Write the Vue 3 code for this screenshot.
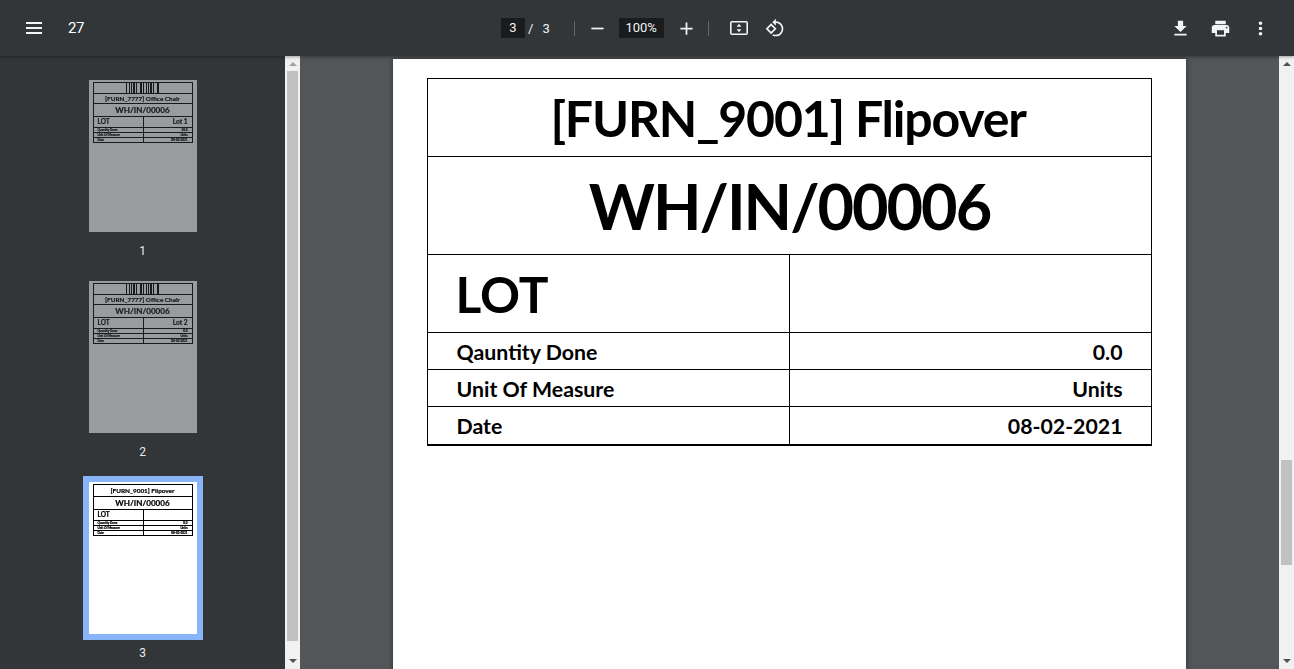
<script setup>
const thumbs = [
  { id: 1, title: "[FURN_7777] Office Chair", lot: "Lot 1", qty: "50.0", barcode: true },
  { id: 2, title: "[FURN_7777] Office Chair", lot: "Lot 2", qty: "0.0", barcode: true },
  { id: 3, title: "[FURN_9001] Flipover", lot: "", qty: "0.0", barcode: false, active: true },
];

const rows = [
  { label: "Qauntity Done", value: "0.0" },
  { label: "Unit Of Measure", value: "Units" },
  { label: "Date", value: "08-02-2021" },
];
</script>

<template>
  <div class="viewer">
    <header class="toolbar">
      <div class="toolbar__left">
        <svg class="icon icon--menu" viewBox="0 0 24 24"><path d="M4 18h16v-2H4v2zm0-5h16v-2H4v2zm0-7v2h16V6H4z" /></svg>
        <span class="doc-title">27</span>
      </div>
      <div class="toolbar__center">
        <span class="page-box">3</span>
        <span class="slash">/</span>
        <span class="page-total">3</span>
        <span class="sep sep--a"></span>
        <svg class="icon icon--small icon--minus" viewBox="0 0 24 24"><path d="M19 13H5v-2h14v2z" /></svg>
        <span class="zoom-box">100%</span>
        <svg class="icon icon--small icon--plus" viewBox="0 0 24 24"><path d="M19 13h-6v6h-2v-6H5v-2h6V5h2v6h6v2z" /></svg>
        <span class="sep sep--b"></span>
        <svg class="icon icon--fit" viewBox="0 0 24 24"><path fill-rule="evenodd" d="M5 5h14a2 2 0 0 1 2 2v10a2 2 0 0 1-2 2H5a2 2 0 0 1-2-2V7a2 2 0 0 1 2-2zm0 1.6a.4.4 0 0 0-.4.4v10c0 .2.2.4.4.4h14a.4.4 0 0 0 .4-.4V7a.4.4 0 0 0-.4-.4H5z" /><path d="M12 7.8 9.6 10.8h4.8zM12 16.2l2.4-3H9.6z" /></svg>
        <svg class="icon icon--rotate" viewBox="0 0 24 24"><path d="M7.34 6.41L.86 12.9l6.49 6.48 6.49-6.48-6.5-6.49zM3.69 12.9l3.66-3.66L11 12.9l-3.66 3.66-3.65-3.66zm15.67-6.26C17.61 4.88 15.3 4 13 4V.76L8.76 5 13 9.24V6c1.79 0 3.58.68 4.95 2.05 2.73 2.73 2.73 7.17 0 9.9C16.58 19.32 14.79 20 13 20c-.97 0-1.94-.21-2.84-.61l-1.49 1.49C10.02 21.62 11.51 22 13 22c2.3 0 4.61-.88 6.36-2.64 3.52-3.51 3.52-9.21 0-12.72z" /></svg>
      </div>
      <div class="toolbar__right">
        <svg class="icon icon--small" viewBox="0 0 24 24"><path d="M19 9h-4V3H9v6H5l7 7 7-7zM5 18v2h14v-2H5z" /></svg>
        <svg class="icon icon--small" viewBox="0 0 24 24"><path d="M19 8H5c-1.66 0-3 1.34-3 3v6h4v4h12v-4h4v-6c0-1.66-1.34-3-3-3zm-3 11H8v-5h8v5zm3-7c-.55 0-1-.45-1-1s.45-1 1-1 1 .45 1 1-.45 1-1 1zm-1-9H6v4h12V3z" /></svg>
        <svg class="icon icon--small" viewBox="0 0 24 24"><path d="M12 8c1.1 0 2-.9 2-2s-.9-2-2-2-2 .9-2 2 .9 2 2 2zm0 2c-1.1 0-2 .9-2 2s.9 2 2 2 2-.9 2-2-.9-2-2-2zm0 6c-1.1 0-2 .9-2 2s.9 2 2 2 2-.9 2-2-.9-2-2-2z" /></svg>
      </div>
    </header>

    <div class="body">
      <aside class="sidebar">
        <div v-for="t in thumbs" :key="t.id" class="thumb" :class="{ 'thumb--active': t.active }">
          <div class="thumb__frame">
            <div class="thumb__page">
              <div class="mini">
                <div v-if="t.barcode" class="mini__row mini__row--bar"><span class="barcode"></span></div>
                <div class="mini__row mini__row--title">{{ t.title }}</div>
                <div class="mini__row mini__row--wh">WH/IN/00006</div>
                <div class="mini__split mini__split--lot">
                  <span>LOT</span>
                  <span>{{ t.lot }}</span>
                </div>
                <div class="mini__split mini__split--tiny">
                  <span>Qauntity Done</span>
                  <span>{{ t.qty }}</span>
                </div>
                <div class="mini__split mini__split--tiny">
                  <span>Unit Of Measure</span>
                  <span>Units</span>
                </div>
                <div class="mini__split mini__split--tiny">
                  <span>Date</span>
                  <span>08-02-2021</span>
                </div>
              </div>
            </div>
          </div>
          <div class="thumb__label">{{ t.id }}</div>
        </div>
      </aside>

      <div class="scrollbar scrollbar--side">
        <span class="arrow arrow--up"></span>
        <span class="scrollbar__thumb"></span>
        <span class="arrow arrow--down"></span>
      </div>

      <main class="stage">
        <div class="paper">
          <table class="label">
            <tbody>
              <tr class="label__title">
                <td colspan="2">[FURN_9001] Flipover</td>
              </tr>
              <tr class="label__ref">
                <td colspan="2">WH/IN/00006</td>
              </tr>
              <tr class="label__lot">
                <td>LOT</td>
                <td></td>
              </tr>
              <tr v-for="r in rows" :key="r.label" class="label__row">
                <td>{{ r.label }}</td>
                <td class="num">{{ r.value }}</td>
              </tr>
            </tbody>
          </table>
        </div>
      </main>

      <div class="scrollbar scrollbar--main">
        <span class="arrow arrow--up"></span>
        <span class="scrollbar__thumb"></span>
        <span class="arrow arrow--down"></span>
      </div>
    </div>
  </div>
</template>

<style>
html,
body {
  margin: 0;
  overflow: hidden;
}
</style>

<style scoped>
.viewer {
  width: 1294px;
  height: 669px;
  display: flex;
  flex-direction: column;
  overflow: hidden;
  font-family: Roboto, "Liberation Sans", sans-serif;
  background: #323639;
}

/* toolbar */
.toolbar {
  height: 56px;
  flex: none;
  display: flex;
  align-items: center;
  background: #323639;
  color: #f1f3f4;
  position: relative;
  z-index: 3;
  box-shadow: 0 1px 3px rgba(0, 0, 0, 0.35);
}
.icon {
  width: 24px;
  height: 24px;
  flex: none;
  fill: #f1f3f4;
}
.icon--small {
  width: 21px;
  height: 21px;
}
.toolbar__left {
  width: 501px;
  flex: none;
  display: flex;
  align-items: center;
  padding-left: 22px;
  box-sizing: border-box;
}
.doc-title {
  margin-left: 22px;
  font-size: 15px;
  letter-spacing: -0.5px;
  color: #fff;
}
.toolbar__center {
  display: flex;
  align-items: center;
  font-size: 13px;
}
.page-box {
  width: 24px;
  height: 20px;
  line-height: 20px;
  text-align: center;
  background: #191b1c;
}
.slash {
  margin-left: 3px;
}
.page-total {
  margin-left: 9px;
}
.sep {
  width: 1px;
  height: 15px;
  background: #63676a;
}
.sep--a {
  margin-left: 24px;
}
.icon--minus {
  margin-left: 12px;
}
.zoom-box {
  width: 45px;
  height: 20px;
  line-height: 20px;
  margin-left: 11px;
  text-align: center;
  background: #191b1c;
}
.icon--plus {
  margin-left: 12px;
}
.sep--b {
  margin-left: 11px;
}
.icon--fit {
  margin-left: 18px;
}
.icon--rotate {
  margin-left: 14px;
  width: 20px;
  height: 20px;
}
.toolbar__right {
  margin-left: auto;
  display: flex;
  gap: 19px;
  padding-right: 23px;
}

/* body */
.body {
  flex: 1;
  min-height: 0;
  display: flex;
}
.sidebar {
  width: 285px;
  flex: none;
  padding-top: 24px;
  box-sizing: border-box;
  background: #323639;
  overflow: hidden;
}
.thumb {
  display: flex;
  flex-direction: column;
  align-items: center;
  margin-bottom: 18px;
  color: #e8eaed;
}
.thumb__frame {
  padding: 6px;
  margin: -6px 0 0;
}
.thumb--active .thumb__frame {
  background: #8ab4f8;
}
.thumb__page {
  width: 108px;
  height: 152px;
  padding: 2px 4px;
  box-sizing: border-box;
  background: #fff;
  opacity: 0.5;
  font-family: Lato, "Open Sans", sans-serif;
  font-weight: 700;
  color: #000;
  filter: blur(0.4px);
  -webkit-text-stroke: 0.2px #000;
}
.thumb--active .thumb__page {
  opacity: 1;
}
.thumb__label {
  margin-top: 5px;
  height: 20px;
  line-height: 17px;
  font-size: 12px;
}

.mini {
  border: 1px solid #000;
}
.mini__row {
  text-align: center;
  border-bottom: 1px solid #000;
  white-space: nowrap;
}
.mini__row--bar {
  height: 10px;
  display: flex;
  justify-content: center;
  align-items: center;
}
.barcode {
  width: 33px;
  height: 10px;
  background: repeating-linear-gradient(90deg, #000 0 1px, #fff 1px 1.6px, #000 1.6px 2.2px, #fff 2.2px 3.4px);
}
.mini__row--title {
  height: 9px;
  line-height: 10px;
  font-size: 6.4px;
}
.mini__row--title:first-child {
  height: 11px;
  line-height: 12px;
}
.mini__row--wh {
  height: 12px;
  line-height: 13px;
  font-size: 8.1px;
}
.mini__split {
  display: grid;
  grid-template-columns: 1fr 1fr;
  border-bottom: 1px solid #000;
}
.mini__split:last-child {
  border-bottom: 0;
}
.mini__split span {
  padding: 0 4px;
  white-space: nowrap;
}
.mini__split span:last-child {
  text-align: right;
  border-left: 1px solid #000;
}
.mini__split--lot {
  height: 10px;
  line-height: 10px;
  font-size: 6.5px;
}
.mini__split--tiny {
  height: 4px;
  line-height: 4px;
  font-size: 3px;
}

/* scrollbars */
.scrollbar {
  width: 15px;
  flex: none;
  background: #f1f1f1;
  display: flex;
  flex-direction: column;
  align-items: center;
}
.scrollbar__thumb {
  width: 11px;
  background: #c1c1c1;
}
.scrollbar--side .scrollbar__thumb {
  height: 570px;
  margin-top: 5px;
}
.scrollbar--side .arrow--up {
  border-bottom-color: #a3a3a3;
}
.scrollbar--main .scrollbar__thumb {
  height: 105px;
  margin-top: 394px;
}
.arrow {
  width: 0;
  height: 0;
  border-left: 4px solid transparent;
  border-right: 4px solid transparent;
}
.arrow--up {
  margin-top: 6px;
  border-bottom: 4px solid #505050;
}
.arrow--down {
  margin-top: auto;
  margin-bottom: 6px;
  border-top: 4px solid #505050;
}

/* document */
.stage {
  flex: 1;
  min-width: 0;
  background: #525659;
  display: flex;
  justify-content: center;
  padding: 3px 0 0 0;
  overflow: hidden;
}
.paper {
  width: 793px;
  height: 1122px;
  flex: none;
  margin-left: -1px;
  padding: 19px 0 0 34px;
  box-sizing: border-box;
  background: #fff;
  box-shadow: 0 0 5px rgba(0, 0, 0, 0.45);
  font-family: Lato, "Open Sans", sans-serif;
  color: #000;
}
.label {
  width: 725px;
  table-layout: fixed;
  border-collapse: collapse;
  font-weight: 700;
  white-space: nowrap;
}
.label td {
  border: 1px solid #000;
  padding: 0 28px 0 29px;
}
.label__title td {
  height: 77px;
  padding-right: 31px;
  text-align: center;
  font-size: 50px;
  letter-spacing: -1.2px;
}
.label__ref td {
  height: 97px;
  text-align: center;
  font-size: 63px;
  letter-spacing: -2px;
}
.label__lot td {
  height: 77px;
  padding-left: 28px;
  font-size: 49.6px;
}
.label__row td {
  height: 37px;
  padding-top: 2px;
  font-size: 21.3px;
  box-sizing: border-box;
}
.label__row:last-child td {
  height: 38px;
  border-bottom-width: 2px;
}
.label .num {
  text-align: right;
}
</style>
